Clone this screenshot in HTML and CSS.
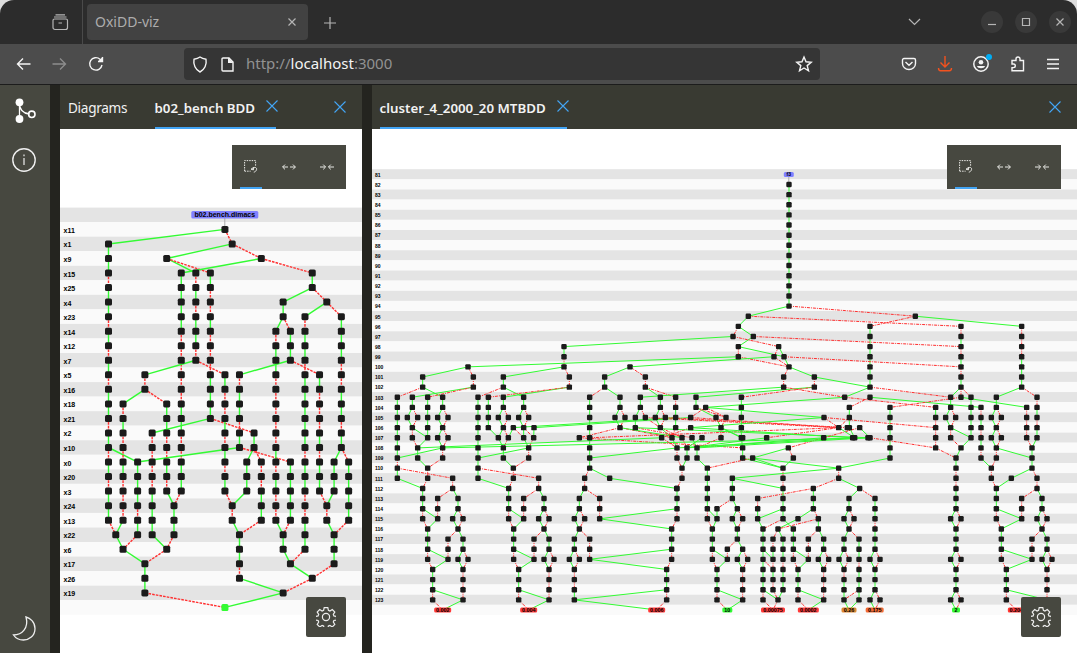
FILE: index.html
```html
<!DOCTYPE html>
<html lang="en">
<head>
<meta charset="utf-8">
<title>OxiDD-viz</title>
<link rel="stylesheet" href="styles.css">
</head>
<body>
<svg class="defs" width="0" height="0">
  <symbol id="close" viewBox="0 0 12 12"><path d="M0.5 0.5L11.5 11.5M11.5 0.5L0.5 11.5"/></symbol>
  <symbol id="select" viewBox="0 0 14 14"><path d="M.6 11V.6h11V6M.6 11.2h6" stroke-dasharray="1.5 1"/><path d="M7 9.2l2.8-1.9-.4 2.6zM9 8.8c1-2.4 4-1.4 3.6.6-.3 1.500-1.600 2.600-2.800 2.800"/></symbol>
  <symbol id="expand" viewBox="0 0 14 8"><path d="M6 4H.7M3 1.600L.6 4 3 6.400M8 4h5.300M11 1.600L13.400 4 11 6.400"/></symbol>
  <symbol id="shrink" viewBox="0 0 14 8"><path d="M0 4h5.300M3.200 1.600L5.600 4 3.200 6.400M14 4H8.700M10.800 1.600L8.400 4l2.400 2.400"/></symbol>
  <symbol id="gear" viewBox="-10 -10 20 20"><circle r="3.600"/><path d="M-1.800-9.300h3.600l.6 2.700 1.500.6 2.400-1.500 2.500 2.500-1.500 2.400.6 1.500 2.600.6v3.400l-2.600.6-.6 1.500 1.500 2.400-2.500 2.500-2.400-1.500-1.500.6-.6 2.600h-3.600l-.6-2.600-1.500-.6-2.400 1.500-2.500-2.500 1.500-2.400-.6-1.500-2.700-.6v-3.400l2.700-.6.6-1.500-1.500-2.400 2.500-2.500 2.400 1.500 1.500-.6z"/></symbol>
</svg>

<div class="window">
  <header class="titlebar">
    <div class="tab-manager"><svg class="ln" width="17" height="17" viewBox="0 0 17 17"><path d="M3.500 .8h9.500M2 3h12.500M2.500 5h11.500a1.500 1.500 0 0 1 1.500 1.500v7a2 2 0 0 1-2 2H3a2 2 0 0 1-2-2v-7A1.500 1.500 0 0 1 2.500 5zM6.500 9h3.500"/></svg></div>
    <div class="browser-tab"><span>OxiDD-viz</span><svg class="ln" width="8" height="8"><path d="M.5.5l7 7M7.500.5l-7 7"/></svg></div>
    <svg class="ln new-tab" width="12" height="12"><path d="M6 0v12M0 6h12"/></svg>
    <svg class="ln tab-list" width="13" height="8"><path d="M1 1l5.500 5.500L12 1"/></svg>
    <div class="controls">
      <i><svg class="ln" width="10" height="10"><path d="M1 7.500h8"/></svg></i>
      <i><svg class="ln" width="10" height="10"><path d="M1.500 1.500h7v7h-7z"/></svg></i>
      <i><svg class="ln" width="10" height="10"><path d="M1.500 1.500l7 7M8.500 1.500l-7 7"/></svg></i>
    </div>
  </header>

  <nav class="navbar">
    <div class="nav-buttons">
      <svg class="ln bright" width="15" height="14"><path d="M14.500 7H1.500M7 1.500L1.500 7 7 12.500"/></svg>
      <svg class="ln dim" width="15" height="14"><path d="M.5 7h13M8 1.500L13.500 7 8 12.500"/></svg>
      <svg class="ln bright" width="16" height="16"><path d="M14 9A6.200 6.200 0 1 1 12 3.200L14 5M14.500 1v4.500H10"/><path class="fill" d="M14.700.8v5H9.800z"/></svg>
    </div>
    <div class="urlbar">
      <svg class="ln bright" width="16" height="17"><path d="M8 1c2 1.500 4 2 6 2.300 1 5.200-1.500 10.500-6 12.700C3.500 13.800 1 8.500 2 3.300 4 3 6 2.500 8 1z"/></svg>
      <svg class="ln bright page" width="13" height="15"><path d="M2 1h6l4 4v9H2a1 1 0 0 1-1-1V2a1 1 0 0 1 1-1z"/><path class="fill" d="M7 .6L12.400 6H7z"/></svg>
      <span class="url">http://<b>localhost</b>:3000</span>
      <svg class="ln bright star" width="16" height="16"><path d="M8 1l2 4.800 5.200.4-4 3.400 1.300 5.200L8 12l-4.500 2.800 1.300-5.200-4-3.400L6 5.800z"/></svg>
    </div>
    <div class="actions">
      <svg class="ln bright" width="16" height="16"><path d="M3 2.500h10A1.500 1.500 0 0 1 14.500 4v3.500a6.500 6 0 0 1-13 0V4A1.500 1.500 0 0 1 3 2.500zM4.500 6L8 9.300 11.500 6"/></svg>
      <svg class="ln download" width="16" height="16"><path d="M8 0v11M3.500 6.500L8 11l4.500-4.500M1.500 12c0 2 .5 2.700 2 2.700h9c1.500 0 2-.7 2-2.700"/></svg>
      <svg class="ln bright account" width="20" height="18"><circle cx="8" cy="9" r="7.200" stroke-width="1.500"/><circle class="fill" cx="8" cy="7.300" r="2.300"/><path class="fill" d="M4 11h8c-.5 3-7.500 3-8 0z"/><circle class="badge" cx="16" cy="2" r="3"/></svg>
      <svg class="ln bright ext" width="16" height="16"><path d="M2 14.800h11.500V4.500H10V3a2 2 0 0 0-4 0v1.500H2V8h1.500a1.800 1.800 0 0 1 0 3.600H2z"/></svg>
      <svg class="ln bright" width="14" height="12"><path d="M1 1.500h12M1 6h12M1 10.500h12"/></svg>
    </div>
  </nav>

  <main class="app">
    <aside class="sidebar">
      <svg width="24" height="28" viewBox="-2.500 -1 24 28"><g stroke="#fff" fill="none" stroke-width="1.300"><path d="M5 4v18M5 5c0 7 4 10.500 10 11"/><circle cx="17.300" cy="16.300" r="3.200" stroke-width="1.600"/></g><circle cx="5" cy="4.300" r="3.900" fill="#fff"/><circle cx="5" cy="21" r="3.900" fill="#fff"/></svg>
      <svg width="24" height="24" viewBox="0 0 24 24" fill="none" stroke="#eee"><circle cx="12" cy="12" r="11.200" stroke-width="1.400"/><path d="M12 10v7M12 6.500v1.700" stroke-width="1.200"/></svg>
      <svg class="moon" width="26" height="27" viewBox="0 0 26 27" fill="none" stroke="#eee" stroke-width="1.300"><path d="M14 2c4 1 9 5 9 11.500C23 21 17 25 11.500 25 7 25 3.500 23 1.500 20 10 20 17 13 14 2z"/></svg>
    </aside>
    <section class="pane pane-left">
      <div class="tabs">
        <div class="tab plain">Diagrams</div>
        <div class="tab active"><span class="bench">b02_bench BDD</span><svg class="x"><use href="#close"/></svg></div>
        <svg class="x pane-close"><use href="#close"/></svg>
      </div>
      <div class="canvas">
        <svg id="bench" width="302" height="524" viewBox="60 129 302 524"></svg>
        <div class="tools"><svg class="on"><use href="#select" width="14" height="14"/></svg><svg><use href="#expand" width="14" height="8" y="3"/></svg><svg><use href="#shrink" width="14" height="8" y="3"/></svg></div>
        <div class="settings"><svg width="20" height="20"><use href="#gear"/></svg></div>
      </div>
    </section>
    <section class="pane pane-right">
      <div class="tabs">
        <div class="tab active"><span class="cluster">cluster_4_2000_20 MTBDD</span><svg class="x"><use href="#close"/></svg></div>
        <svg class="x pane-close"><use href="#close"/></svg>
      </div>
      <div class="canvas">
        <svg id="cluster" width="705" height="524" viewBox="372 129 705 524"></svg>
        <div class="tools"><svg class="on"><use href="#select" width="14" height="14"/></svg><svg><use href="#expand" width="14" height="8" y="3"/></svg><svg><use href="#shrink" width="14" height="8" y="3"/></svg></div>
        <div class="settings"><svg width="20" height="20"><use href="#gear"/></svg></div>
      </div>
    </section>
  </main>
</div>
<script src="graphs.js"></script>
</body>
</html>
```
FILE: styles.css
```css
* { box-sizing: border-box; }
body { margin: 0; width: 1077px; height: 653px; overflow: hidden; background: #ddd; font-family: "Noto Sans", sans-serif; }
svg { display: block; flex: none; }
.defs { position: absolute; }
.window { display: flex; flex-direction: column; height: 653px; border-radius: 14px 14px 0 0; overflow: hidden; }
.ln { fill: none; stroke: #b5b5b5; stroke-width: 1.2; overflow: visible; }
.ln.bright { stroke: #f4f4f4; stroke-width: 1.4; }
.ln.dim { stroke: #8d8d8d; stroke-width: 1.4; }
.ln .fill { fill: #f4f4f4; stroke: none; }

.titlebar { display: flex; align-items: center; height: 44px; background: #2c2c2c; }
.tab-manager { width: 83px; height: 44px; border-right: 1px solid #4a4a4a; padding: 14px 0 0 52px; }
.browser-tab { display: flex; align-items: center; justify-content: space-between; width: 221px; height: 36px; margin-left: 4px; padding: 0 12px 1px 8px; background: #424242; border-radius: 4px; color: #adadad; font-size: 14px; letter-spacing: 0; }
.new-tab { margin: 1px 0 0 16px; }
.tab-list { margin-left: 572px; }
.controls { display: flex; gap: 12px; margin-left: 60px; }
.controls i { display: grid; place-items: center; width: 22px; height: 22px; border-radius: 50%; background: #393939; }

.navbar { display: flex; align-items: center; height: 41px; background: #4c4c4c; border-bottom: 1px solid #1c1c1c; }
.nav-buttons { display: flex; align-items: center; gap: 21px; width: 184px; padding-left: 16px; }
.urlbar { display: flex; align-items: center; width: 636px; height: 32px; padding: 0 8px; background: #353535; border-radius: 4px; }
.page { margin-left: 13px; }
.url { margin: -2px 0 0 12px; color: #929292; font-size: 15px; }
.url b { font-weight: 400; color: #f4f4f4; }
.star { margin-left: auto; }
.actions { display: flex; align-items: center; gap: 20px; margin-left: 81px; }
.account { margin-right: -2px; }
.ext { margin-left: -1px; }
.actions .download { stroke: #f2521f; stroke-width: 1.4; }
.badge { fill: #00adf5; stroke: none; }

.app { display: flex; flex: 1; background: #24241f; }
.sidebar { display: flex; flex-direction: column; width: 50px; height: 568px; padding: 12px 12px 11px; background: #474840; }
.sidebar svg + svg { margin-top: 23px; }
.sidebar .moon { margin-top: auto; }
.pane { display: flex; flex-direction: column; }
.pane-left { width: 302px; margin-left: 10px; }
.pane-right { width: 705px; margin-left: 10px; }
.tabs { display: flex; height: 44px; padding: 0 16px 0 8px; background: #393a32; color: #f2f2f2; font-size: 13.6px; line-height: 20px; }
.tab { display: flex; height: 44px; padding-top: 13px; white-space: nowrap; }
.plain { width: 87px; letter-spacing: -.3px; }
.active { font-weight: 600; font-size: 13.3px; border-bottom: 2px solid #43a5f5; }
.x { width: 12px; height: 12px; fill: none; stroke: #43a5f5; stroke-width: 1.1; }
.active .x { margin: 2px -2px 0 10px; }
.bench { width: 101px; margin-left: -.5px; }
.cluster { width: 167px; margin-left: -.5px; }
.pane-right .active .x { margin-left: 10px; }
.pane-right .active { border: 0; background: linear-gradient(#43a5f5, #43a5f5) 0 100% / 100% 2px no-repeat; }
.pane-close { margin: 16px .5px 0 auto; }

.canvas { position: relative; height: 524px; background: #fff; }
.tools { position: absolute; top: 16px; right: 16px; display: flex; gap: 16px; width: 114px; height: 44px; padding: 0 8px; background: #474840; }
.tools svg { width: 22px; height: 44px; padding: 15px 0 0 4px; fill: none; stroke: #e8e8e4; stroke-width: 1; overflow: visible; }
.tools .on { background: linear-gradient(#43a5f5, #43a5f5) 0 100% / 100% 2px no-repeat; }
.settings { position: absolute; right: 16px; bottom: 16px; display: grid; place-items: center; width: 40px; height: 40px; border-radius: 2px; background: #474840; }
.settings svg { fill: none; stroke: #eee; stroke-width: 1.2; }

.band { fill: #fafafa; }
.band.dark { fill: #e4e4e4; }
.g { stroke: #33fb33; }
.r { stroke: #ff3030; stroke-dasharray: 2.6 1.1; }
#cluster .r { stroke-dasharray: 3 1 1 1; }
#bench .edges { stroke-width: 1.4; }
#cluster .edges { stroke-width: 1; }
.node { fill: #1b1b1b; }
.stem { stroke: #aaa; }
.row-label, .tag-label { font-family: "Liberation Sans", sans-serif; font-weight: 700; fill: #000; }
.tag-label { text-anchor: middle; }
```
FILE: graphs.js
```js
// A chain reads "x@row tokens": each g/r letter is one edge down a row,
// and a number after a letter is the column that edge ends in.
function build(id, cfg) {
  const edges = [], nodes = new Map();
  const X = v => cfg.x0 + v * cfg.dx, Y = r => cfg.y0 + (r - cfg.first) * cfg.dy;
  const node = (x, r) => nodes.set(x + '@' + r, [x, r]);
  for (const [off, text] of cfg.groups) {
    for (const line of text.trim().split(/\s*;\s*/)) {
      if (!line) continue;
      const m = line.match(/^(-?\d+)@(\d+)\s*(.*)$/);
      let x = +m[1] + off, r = +m[2];
      node(x, r);
      for (const t of m[3].matchAll(/([gr])(-?\d+)?/g)) {
        const nx = t[2] === undefined ? x : +t[2] + off;
        edges.push([t[1], x, r, nx, r + 1]);
        x = nx; r++;
        node(x, r);
      }
    }
  }
  let out = '';
  const n = cfg.labels.length, x1 = cfg.left, w = cfg.width;
  for (let i = 0; i < cfg.bands; i++) {
    const y = cfg.bandTop + i * cfg.dy;
    out += `<rect class="band${i % 2 ? '' : ' dark'}" x="${x1}" y="${y}" width="${w}" height="${cfg.dy}"/>`;
  }
  for (let i = 0; i < n; i++)
    out += `<text class="row-label" font-size="${cfg.font}" x="${x1 + cfg.pad}" y="${Y(cfg.first + i) + cfg.font * .36 + cfg.drop}">${cfg.labels[i]}</text>`;
  out += `<line class="stem" x1="${cfg.tag.x}" x2="${cfg.tag.x}" y1="${cfg.tag.y}" y2="${cfg.tag.y + cfg.dy}"/><g class="edges">`;
  for (const [c, a, b, d, e] of edges)
    out += `<line class="${c}" x1="${X(a)}" y1="${Y(b)}" x2="${X(d)}" y2="${Y(e)}"/>`;
  out += '</g>';
  const s = cfg.size;
  for (const [x, r] of nodes.values()) {
    if (r === cfg.last && cfg.ends.length) continue;
    const fill = r === cfg.last ? ' style="fill:#33fb33"' : '';
    out += `<rect class="node"${fill} x="${X(x) - s / 2}" y="${Y(r) - s / 2}" width="${s}" height="${s}" rx="${s * .22}"/>`;
  }
  const tag = (x, y, w, h, f, color, t) =>
    `<rect x="${x - w / 2}" y="${y - h / 2}" width="${w}" height="${h}" rx="1.5" fill="${color}"/><text class="tag-label" font-size="${f}" x="${x}" y="${y + f * .36}">${t}</text>`;
  out += tag(cfg.tag.x, cfg.tag.y, cfg.tag.w, cfg.tag.h, cfg.font, '#8080ff', cfg.tag.text);
  for (const [x, w, color, t] of cfg.ends) out += tag(X(x), Y(cfg.last), w, 5, 5.4, color, t);
  document.getElementById(id).innerHTML = out;
}

build('bench', {
  x0: 108.5, dx: 7.277, y0: 229.4, dy: 14.54, first: 0, last: 26,
  left: 60, width: 302, bandTop: 207.6, bands: 28, pad: 3.5, font: 7, drop: 1, size: 7,
  labels: 'x11 x1 x9 x15 x25 x4 x23 x14 x12 x7 x5 x16 x18 x21 x2 x10 x0 x20 x3 x24 x13 x22 x6 x17 x26 x19'.split(' '),
  tag: { x: 224.8, y: 214.8, w: 67, h: 7.5, text: 'b02.bench.dimacs' },
  ends: [],
  groups: [[0, `
    16@0 g0; 16@0 r17; 17@1 g8; 17@1 r21; 8@2 g12; 8@2 r14; 21@2 g10; 21@2 r28;
    0@1 ggrggrgrgrggrgrgrggr1; 0@15 g4;
    2@12 rgrrgrrrg1; 1@21 g2; 4@16 gggrgr2; 2@22 g5ggr16; 8@22 r5;
    6@14 rrrrgggg8; 8@12 ggrrgrg9; 9@19 ggr8;
    10@3 ggggrrrrrggrrggr9;
    12@3 rgrggrg5; 12@9 r16; 5@10 rg2; 5@11 r8;
    14@3 grrgrrrgggg6; 14@13 r20;
    16@10 grrgrgrgr17rg18; 21@20 r18; 18@21 ggrg24;
    18@10 rggrgg4; 18@15 r25; 20@14 gg19; 20@15 r21; 19@16 ggg17; 21@16 rrgg;
    28@3 gg24; 28@4 r30; 24@5 gg23; 24@6 r25; 30@5 g27; 30@5 r32;
    23@7 rggrrrrrgrgrrg24; 25@7 ggg18; 25@9 r29; 25@16 ggggr24; 24@21 gg25g28r24g16;
    27@6 rggrgggggrggrrggr25; 31@23 r28;
    29@10 grrrgrggr30rg31gg; 31@16 ggg30; 32@6 gggrrggrgg31; 32@15 r33; 33@16 ggggr31`]]
});

// Lower part shared by the two left-most subtrees.
const subtree = `152@112 ggr; 152@114 g197; 242@111 rr197rr; 242@112 g258gg242g258;
  258@114 r273r258; 258@116 r228rr; 258@116 g273gg258g273; 273@118 r288r273rrrg212;
  152@115 r167ggrr182ggrr212; 197@115 g167; 167@118 g228g182; 182@122 g273`;

build('cluster', {
  x0: 372, dx: 1 / 3, y0: 174.4, dy: 10.13, first: 81, last: 124,
  left: 372, width: 705, bandTop: 169.2, bands: 44, pad: 3, font: 5, drop: .5, size: 5.4,
  labels: Array.from({ length: 43 }, (_, i) => 81 + i),
  tag: { x: 788.8, y: 174.5, w: 10, h: 5, text: 'f3' },
  ends: [
    [212, 17, '#ff3838', '0.002'], [470, 17, '#ff3838', '0.004'], [854, 17, '#ff3838', '0.006'],
    [1066, 10, '#33fb33', '10'], [1203, 24, '#ff3838', '0.00075'], [1309, 21, '#ff3838', '0.0002'],
    [1431, 15, '#dd8833', '0.26'], [1508, 18, '#f26a35', '0.175'], [1752, 8, '#33fb33', '2'], [1933, 17, '#ff3838', '0.204']
  ],
  groups: [
    [0, subtree], [258, subtree],
    [0, `
    576@98 grg394gg455; 576@100 r592rg394; 394@102 r318; 592@102 r349;
    288@100 g152gr76; 288@100 r304rg121; 152@102 g212; 304@102 r167; 774@100 g698gr653; 774@100 r820rg865; 698@102 g744; 820@102 r911;
    76@103 ggggggrgg152; 76@110 r242;
    121@103 gg106g121rr137gg167rr152; 121@104 r137r121g167; 167@103 ggggg137;
    212@103 gg197g212g197g212rr167; 212@104 r228r212r228r212; 212@108 g76;
    318@103 ggggggggg410; 318@110 r500; 349@103 gggg379;
    394@103 gg379g394g379g394gg424rr410; 394@104 r409r394r409r394; 424@106 g409; 424@106 r455;
    455@103 gg440g455gg470rr424; 455@104 r470r455r485r470; 486@106 g485; 470@108 g318;
    653@103 gggggggr638rg622gg607g622g607gg592g607rrgg854; 653@110 g713g914;
    638@112 r683rrg899; 622@114 r638r622r653rrg884; 607@118 r622r607;
    622@107 r1112; 744@106 r622; 1400@106 r653; 869@107 g137; 1494@107 g212`],
    [684, `
    60@103 gg45g60; 60@104 r75r60; 121@103 gg106g; 121@104 r136r181; 181@103 gg166g181g216; 181@104 r196r181r246;
    227@103 rggr216; 60@106 r216; 60@106 g246; 106@106 r276; 272@106 r185; 272@106 g758;
    288@103 gg348g363rr291; 288@104 r378; 317@104 r272r716; 317@104 g672r716r500g261; 317@104 r378r363g428;
    272@105 g-198; 227@105 g-260; 196@105 r742; 136@105 r716; 672@105 g272; 106@106 g804;
    424@103 ggggg428gg549; 458@109 r322; 458@109 g716; 671@107 r565g458g549; 565@108 r580g549;
    758@107 g231; 804@107 g291; 671@107 g261; 276@107 g291; 306@107 g261; 246@107 r261; 185@107 r231; 363@106 g424;
    551@102 g121; 643@102 g288; 551@102 r734; 643@102 r424;
    216@107 g231rr246rr231ggrr215ggrr200ggrr170; 261@108 gg246; 291@108 gg322; 231@108 g-31;
    231@114 g-1; 215@118 g-31; 200@122 g-77;
    322@110 ggggrr337ggrr351ggrr382; 322@114 g351g337; 337@118 g382g351; 351@122 g428g382;
    397@111 ggg412g397g412gg428g412g428rrr; 397@113 r351g; 412@114 r428r412; 412@117 r382r; 428@118 r443r428; 397@111 g549;
    716@110 g397; 716@110 rr640ggg594g534; 640@112 r473rgg489; 640@114 r655r534; 655@115 g655; 716@111 g779;
    549@110 rrgggg580; 549@114 g473; 549@115 r489;
    489@116 ggggggrr519; 489@118 g519; 489@119 r519; 489@122 g534r519; 534@116 r519rgrgrr534; 534@116 g549ggrggg534;
    580@116 ggrr594ggrr625; 580@118 g625g594; 594@122 g671g625; 655@116 r625rr; 655@116 g671gg655g671rrr; 671@118 r686r671`],
    [1374, `
    120@102 g44g-373; 120@102 r362; 44@103 r317grrrr378; 120@103 r58gg; 120@103 g453rgrgrg484;
    393@102 g362gg347g362rr393g378; 393@102 r423ggggg393; 362@104 r377r362; 362@106 g423;
    393@103 r180gggggg26; 393@103 g590rrrr606; -18@105 r317; 120@107 r317; 393@102 r393;
    58@105 r26; 58@106 g74; 89@106 r-19; 89@106 g120; 26@106 g74;
    378@109 grrggg362g378ggg362g378ggg362g378; 378@114 r393r378; 378@118 r393r378; 378@122 r393r378;
    575@102 g499gg484g499g484g499rr484rr499ggrr514ggrr529ggrr559; 575@102 r621rgrgg606ggr621rg636gg621g636g651gg636g651rrr;
    499@104 r514r499r514r499; 499@108 g606; 606@110 g544g499; 621@112 r575rrg514; 636@114 r651r636r606rr; 651@118 r666r651;
    499@114 g575; 514@118 g606g529; 529@122 g651g559;
    89@112 g57gg42g57g42gg27g42rggg57; 89@112 r135ggrggg120g135ggg120g135; 57@114 r72r57; 57@116 r87ggrgggg57; 42@118 r57r42; 87@122 r42;
    135@118 r150r135; 135@122 r150r135`],
    [1044, `
    207@82 ggggggggggggg85g55r39g-468; 207@94 r586r450gggggg; 85@95 r723rgrgrg; 586@95 g905rrrggg;
    55@96 g100g55rr207r191r; 39@97 r176r162r207g283r; 100@97 r723; 55@98 g192g207; 176@98 g192r723; 55@99 g-756; 162@99 g-270; 283@101 g450`]
  ]
});
```
